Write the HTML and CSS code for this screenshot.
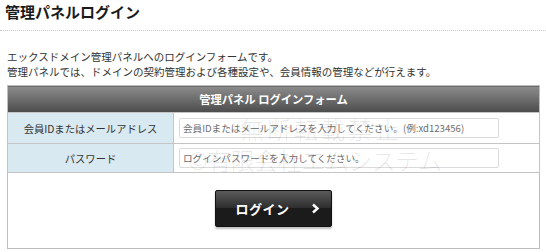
FILE: index.html
```html
<!DOCTYPE html>
<html lang="ja">
<head>
  <meta charset="UTF-8">
  <meta name="viewport" content="width=device-width, initial-scale=1.0">
  <title>管理パネルログイン</title>
  <link rel="stylesheet" href="styles.css">
</head>
<body>

<div class="page">
  <h1 class="page-title">管理パネルログイン</h1>

  <p class="lead">
    エックスドメイン管理パネルへのログインフォームです。<br>
    管理パネルでは、ドメインの契約管理および各種設定や、会員情報の管理などが行えます。
  </p>

  <form id="login-form">
    <table class="login-table">
      <tr>
        <th class="login-head" colspan="2">管理パネル ログインフォーム</th>
      </tr>
      <tr class="row-id">
        <th class="field-label"><label for="memberid">会員IDまたはメールアドレス</label></th>
        <td class="field-input">
          <input type="text" id="memberid" name="memberid" placeholder="会員IDまたはメールアドレスを入力してください。(例:xd123456)">
        </td>
      </tr>
      <tr class="row-pass">
        <th class="field-label"><label for="password">パスワード</label></th>
        <td class="field-input">
          <input type="password" id="password" name="password" placeholder="ログインパスワードを入力してください。">
        </td>
      </tr>
      <tr>
        <td class="submit-cell" colspan="2">
          <button type="submit" class="login-btn">
            <span class="btn-text">ログイン</span>
            <svg class="chev" width="9" height="11" viewBox="0 0 9 11"><polyline points="2,1.5 6.5,5.5 2,9.5" fill="none" stroke="#fff" stroke-width="2.4"/></svg>
          </button>
        </td>
      </tr>
    </table>
  </form>

  <!-- 透かし -->
  <div class="watermark wm-1">無断転載禁止</div>
  <div class="watermark wm-2">©有限会社エムシステム</div>
</div>

</body>
</html>
```

FILE: styles.css
```css
body {
  margin: 0;
  background-color: #fff;
  font-family: 'Noto Sans CJK JP', 'Noto Sans', sans-serif;
  color: #333;
}

.page {
  position: relative;
  width: 546px;
  height: 252px;
  overflow: hidden;
}

.page-title {
  margin: 0;
  padding: 2px 0 0 5px;
  height: 28px;
  font-size: 15px;
  line-height: 20px;
  font-weight: bold;
  color: #1a1a1a;
  border-bottom: 1px dotted #c8c8c8;
}

.lead {
  margin: 18px 0 0 7px;
  font-size: 10.5px;
  line-height: 15px;
  color: #333;
}

.login-table {
  margin: 6px 6px 0 7px;
  width: 533px;
  border-collapse: collapse;
  border: 1px solid #bdbdbd;
}

.login-head {
  height: 26px;
  padding: 0;
  background: linear-gradient(#8c8c8c, #4c4c4c);
  color: #fff;
  font-size: 11.3px;
  font-weight: bold;
  text-align: center;
}

.field-label {
  width: 165px;
  padding: 0;
  background-color: #d8e9f1;
  border: 1px solid #c4c4c4;
  font-size: 10.3px;
  font-weight: normal;
  color: #333;
  text-align: center;
}

.row-id .field-label,
.row-id .field-input {
  height: 30px;
}

.row-pass .field-label,
.row-pass .field-input {
  height: 28px;
}

.field-input {
  padding: 0 0 0 5px;
  border: 1px solid #c4c4c4;
}

.field-input input {
  display: block;
  box-sizing: border-box;
  width: 320px;
  height: 20px;
  padding: 0 3px;
  border: 1px solid #dadada;
  border-radius: 2px;
  font-family: inherit;
  font-size: 9.6px;
  color: #333;
}

.field-input input::placeholder {
  color: #6e6e6e;
}

.submit-cell {
  height: 75px;
  padding: 0;
  text-align: center;
}

.login-btn {
  position: relative;
  top: -2px;
  display: inline-flex;
  align-items: center;
  justify-content: center;
  width: 117px;
  height: 37px;
  padding: 0 0 0 8px;
  border: 1px solid #111;
  border-radius: 2px;
  background: linear-gradient(#5a5a5a 0%, #2e2e2e 48%, #1b1b1b 50%, #1b1b1b 100%);
  box-shadow: 0 2px 2px rgba(0, 0, 0, 0.25);
  color: #fff;
  font-family: inherit;
  font-size: 13px;
  font-weight: bold;
  letter-spacing: 0.5px;
  cursor: pointer;
}

.login-btn .chev {
  margin-left: 21px;
}

.watermark {
  position: absolute;
  color: rgba(0, 0, 0, 0.1);
  font-size: 24px;
  font-weight: 300;
  pointer-events: none;
  white-space: nowrap;
}

.wm-1 {
  left: 240px;
  top: 111px;
  letter-spacing: 3px;
}

.wm-2 {
  left: 188px;
  top: 142px;
  letter-spacing: -0.5px;
}
```
